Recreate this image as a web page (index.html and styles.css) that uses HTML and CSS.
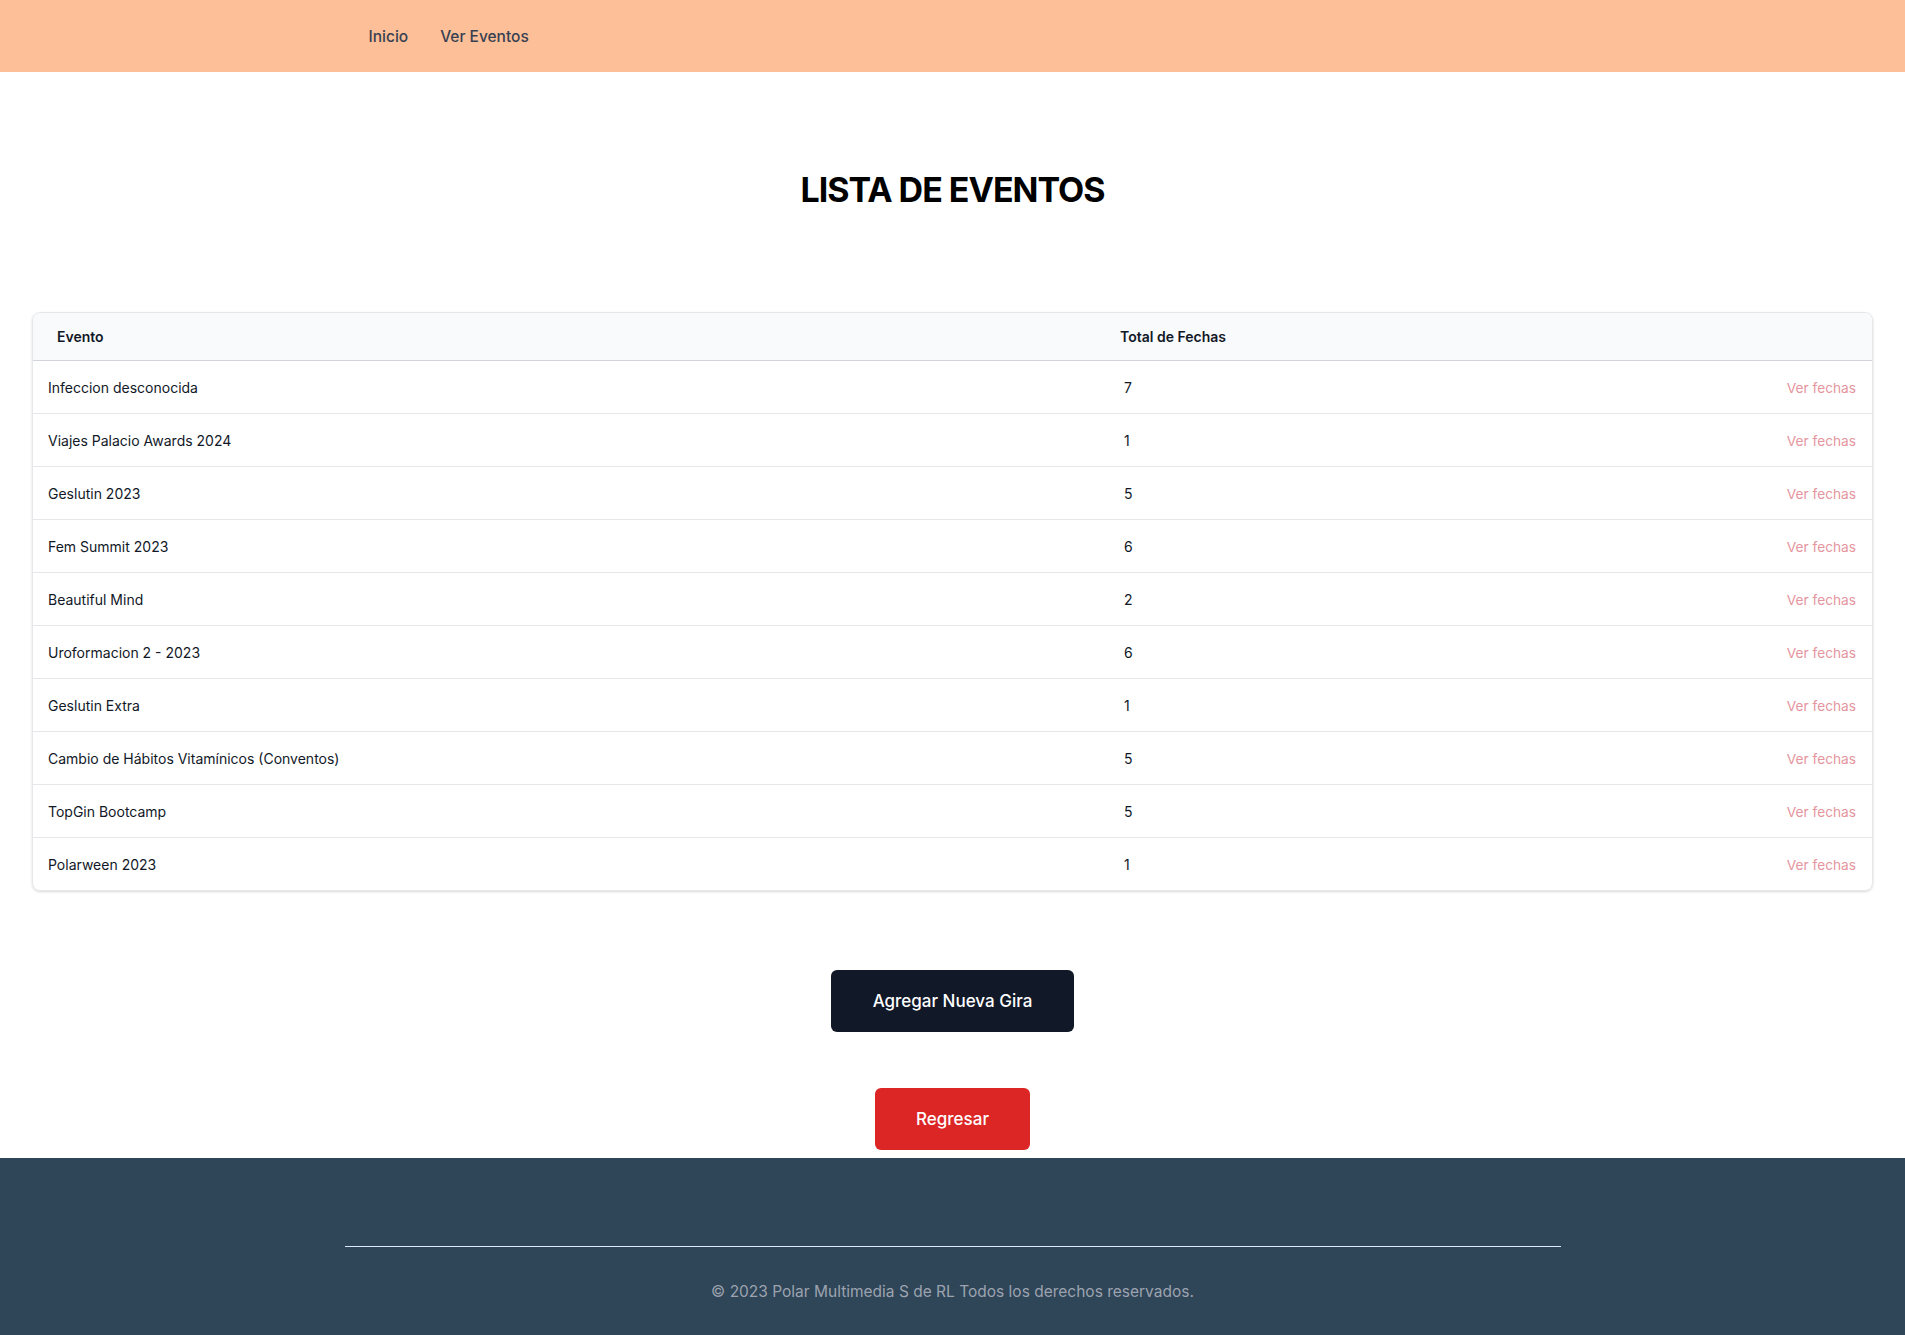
FILE: index.html
```html
<!DOCTYPE html>
<html lang="es">
<head>
<meta charset="utf-8">
<title>Lista de eventos</title>
<link rel="stylesheet" href="styles.css">
</head>
<body>
<header class="nav">
  <div class="nav-inner">
    <a class="nav-link" href="#">Inicio</a>
    <a class="nav-link" href="#">Ver Eventos</a>
  </div>
</header>
<main class="main">
  <h1 class="title">LISTA DE EVENTOS</h1>
  <div class="card">
    <table class="table">
      <thead>
        <tr><th class="col-name">Evento</th><th class="col-total">Total de Fechas</th><th class="col-action"></th></tr>
      </thead>
      <tbody>
        <tr><td>Infeccion desconocida</td><td class="num">7</td><td class="action"><a href="#">Ver fechas</a></td></tr>
        <tr><td>Viajes Palacio Awards 2024</td><td class="num">1</td><td class="action"><a href="#">Ver fechas</a></td></tr>
        <tr><td>Geslutin 2023</td><td class="num">5</td><td class="action"><a href="#">Ver fechas</a></td></tr>
        <tr><td>Fem Summit 2023</td><td class="num">6</td><td class="action"><a href="#">Ver fechas</a></td></tr>
        <tr><td>Beautiful Mind</td><td class="num">2</td><td class="action"><a href="#">Ver fechas</a></td></tr>
        <tr><td>Uroformacion 2 - 2023</td><td class="num">6</td><td class="action"><a href="#">Ver fechas</a></td></tr>
        <tr><td>Geslutin Extra</td><td class="num">1</td><td class="action"><a href="#">Ver fechas</a></td></tr>
        <tr><td>Cambio de Hábitos Vitamínicos (Conventos)</td><td class="num">5</td><td class="action"><a href="#">Ver fechas</a></td></tr>
        <tr><td>TopGin Bootcamp</td><td class="num">5</td><td class="action"><a href="#">Ver fechas</a></td></tr>
        <tr><td>Polarween 2023</td><td class="num">1</td><td class="action"><a href="#">Ver fechas</a></td></tr>
      </tbody>
    </table>
  </div>
  <div class="actions">
    <a class="btn btn-dark" href="#">Agregar Nueva Gira</a>
    <a class="btn btn-red" href="#">Regresar</a>
  </div>
</main>
<footer class="footer">
  <div class="footer-inner">
    <hr class="footer-line">
    <p class="copy">© 2023 Polar Multimedia S de RL Todos los derechos reservados.</p>
  </div>
</footer>
</body>
</html>
```
FILE: styles.css
```css
* { box-sizing: border-box; }
html, body { margin: 0; padding: 0; }
body {
  font-family: Inter, "Noto Sans", "Liberation Sans", sans-serif;
  color: #111827;
  background: #ffffff;
}
a { text-decoration: none; }

.nav {
  background: #fdbf98;
  height: 72px;
}
.nav-inner {
  max-width: 1280px;
  margin: 0 auto;
  padding: 0 32px 0 56px;
  height: 100%;
  display: flex;
  align-items: center;
  gap: 32px;
}
.nav-link {
  color: #374151;
  font-size: 15.5px;
  font-weight: 500;
}

.main {
  padding: 0 32px;
}
.title {
  margin: 0;
  padding: 98px 0 0;
  height: 240px;
  text-align: center;
  font-size: 34px;
  line-height: 40px;
  font-weight: 700;
  color: #000;
  letter-spacing: -1px;
}

.card {
  border: 1px solid #e5e7eb;
  border-radius: 8px;
  box-shadow: 0 1px 3px rgba(0,0,0,0.1), 0 1px 2px rgba(0,0,0,0.06);
  overflow: hidden;
}
.table {
  width: 100%;
  border-collapse: collapse;
  font-size: 14px;
}
.table thead tr {
  background: #f9fafb;
  border-bottom: 1px solid #d1d5db;
}
.table th {
  height: 47px;
  padding: 1px 24px 0;
  text-align: left;
  font-size: 14px;
  font-weight: 600;
  color: #111827;
}
.col-name { width: 1087px; }
.col-total { width: 300px; padding-left: 0 !important; }
.table tbody tr {
  border-bottom: 1px solid #e5e7eb;
}
.table tbody tr:last-child { border-bottom: none; }
.table td {
  height: 53px;
  padding: 2px 16px 0 15px;
  color: #111827;
}
.table td.num { padding-left: 4px; }
.table td.action { text-align: right; padding-right: 16px; }
.table td.action a {
  color: #e5959e;
  font-size: 13.7px;
}

.actions {
  display: flex;
  flex-direction: column;
  align-items: center;
  gap: 56px;
  padding: 79px 0 8px;
}
.btn {
  display: inline-flex;
  align-items: center;
  justify-content: center;
  height: 62px;
  border-radius: 6px;
  color: #fff;
  font-size: 17px;
  font-weight: 500;
}
.btn-dark { background: #111827; width: 243px; }
.btn-red { background: #dc2626; width: 155px; }

.footer {
  background: #2f4558;
  height: 178px;
}
.footer-inner {
  max-width: 1280px;
  margin: 0 auto;
  padding: 88px 32px 0;
}
.footer-line {
  margin: 0;
  border: none;
  border-top: 1px solid #dbeafe;
}
.copy {
  margin: 33px 0 0;
  text-align: center;
  color: #9ca3af;
  font-size: 15.5px;
  line-height: 24px;
}
```
